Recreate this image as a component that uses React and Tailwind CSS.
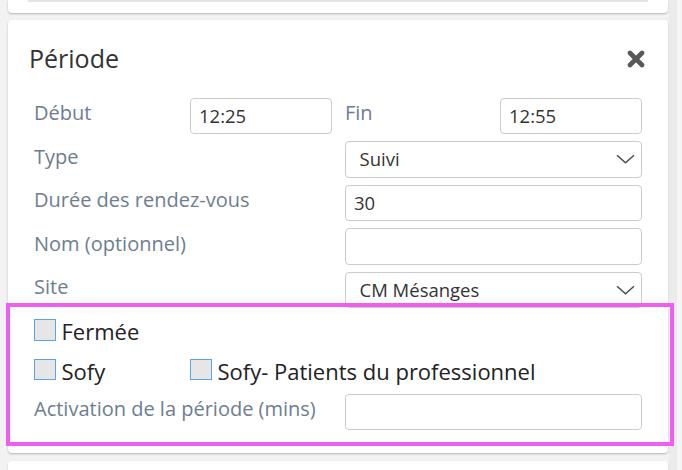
import React from "react";

const LABEL = "text-[20px] leading-[27px] pt-[1.5px] text-[#6e7d8f]";
const FIELD =
  "h-[36.5px] rounded-[4px] border border-[#cccccc] bg-white flex items-center text-[18.5px] text-[#333333]";

function Chevron() {
  return (
    <svg width="19" height="10" viewBox="0 0 19 10" className="shrink-0">
      <polyline points="1,1.2 9.5,8.8 18,1.2" fill="none" stroke="#4a4a4a" strokeWidth="1.5" />
    </svg>
  );
}

function CloseIcon() {
  return (
    <svg width="18" height="18" viewBox="0 0 18 18">
      <path d="M3 3 L15 15 M15 3 L3 15" stroke="#585858" strokeWidth="4.6" strokeLinecap="round" />
    </svg>
  );
}

function Checkbox({ label }) {
  return (
    <div className="flex items-start gap-[6px]">
      <span className="mt-[2px] w-[21.5px] h-[21.5px] border border-[#59a5e6] bg-[#e6e6e6] shrink-0" />
      <span className="text-[22px] leading-[29px] text-[#222222]">{label}</span>
    </div>
  );
}

function WideRow({ label, children }) {
  return (
    <div className="flex">
      <div className={`w-[311px] ${LABEL}`}>{label}</div>
      {children}
    </div>
  );
}

export default function App() {
  return (
    <div className="relative flex h-[470px] w-[682px] overflow-hidden bg-[#f2f2f2] font-['Open_Sans',sans-serif]">
      <div className="w-[669px] pl-[8px] pr-[1px]">
        {/* previous card (cut off) */}
        <div className="h-[13px] bg-white rounded-b-[4px] shadow-[0_1px_2px_rgba(0,0,0,0.25)] px-[20px]">
          <div className="h-[2px] bg-[#e3e3e3]" />
        </div>

        {/* Période card */}
        <div className="mt-[7px] bg-white rounded-[4px] shadow-[0_1px_2px_rgba(0,0,0,0.25)] pt-[21px] pb-[23px]">
          <div className="flex items-center justify-between pl-[21px] pr-[23.5px]">
            <h2 className="text-[25px] leading-[35px] font-normal text-[#333333]">Période</h2>
            <CloseIcon />
          </div>

          <div className="mt-[21.5px] px-[26px] flex flex-col gap-[7px]">
            <div className="flex">
              <div className={`w-[156px] ${LABEL}`}>Début</div>
              <div className={`w-[142px] pl-[8px] ${FIELD}`}>12:25</div>
              <div className={`w-[155px] ml-[13px] ${LABEL}`}>Fin</div>
              <div className={`w-[142px] pl-[8px] ${FIELD}`}>12:55</div>
            </div>
            <WideRow label="Type">
              <div className={`w-[297px] pl-[13.5px] pr-[6px] justify-between ${FIELD}`}>
                <span>Suivi</span>
                <Chevron />
              </div>
            </WideRow>
            <WideRow label="Durée des rendez-vous">
              <div className={`w-[297px] pl-[8px] ${FIELD}`}>30</div>
            </WideRow>
            <WideRow label="Nom (optionnel)">
              <div className={`w-[297px] pl-[8px] ${FIELD}`} />
            </WideRow>
            <WideRow label="Site">
              <div className={`w-[297px] pl-[13.5px] pr-[6px] justify-between ${FIELD}`}>
                <span>CM Mésanges</span>
                <Chevron />
              </div>
            </WideRow>

            <div className="mt-[2px] flex flex-col gap-[10.5px]">
              <Checkbox label="Fermée" />
              <div className="flex">
                <div className="w-[156px]">
                  <Checkbox label="Sofy" />
                </div>
                <Checkbox label="Sofy- Patients du professionnel" />
              </div>
            </div>

            <div className="mt-[1px]">
              <WideRow label="Activation de la période (mins)">
                <div className={`w-[297px] ${FIELD}`} />
              </WideRow>
            </div>
          </div>
        </div>

        {/* next card (cut off) */}
        <div className="mt-[8px] h-[20px] bg-white rounded-t-[4px] shadow-[0_1px_2px_rgba(0,0,0,0.2)]" />
      </div>
      <div className="w-[8px] bg-[#ebebeb]" />
      <div className="flex-1 bg-[#f5f5f5]" />

      {/* annotation highlight */}
      <div className="absolute left-[6px] top-[303px] w-[668px] h-[143px] border-[4px] border-[#ee5ef1] pointer-events-none" />
    </div>
  );
}
